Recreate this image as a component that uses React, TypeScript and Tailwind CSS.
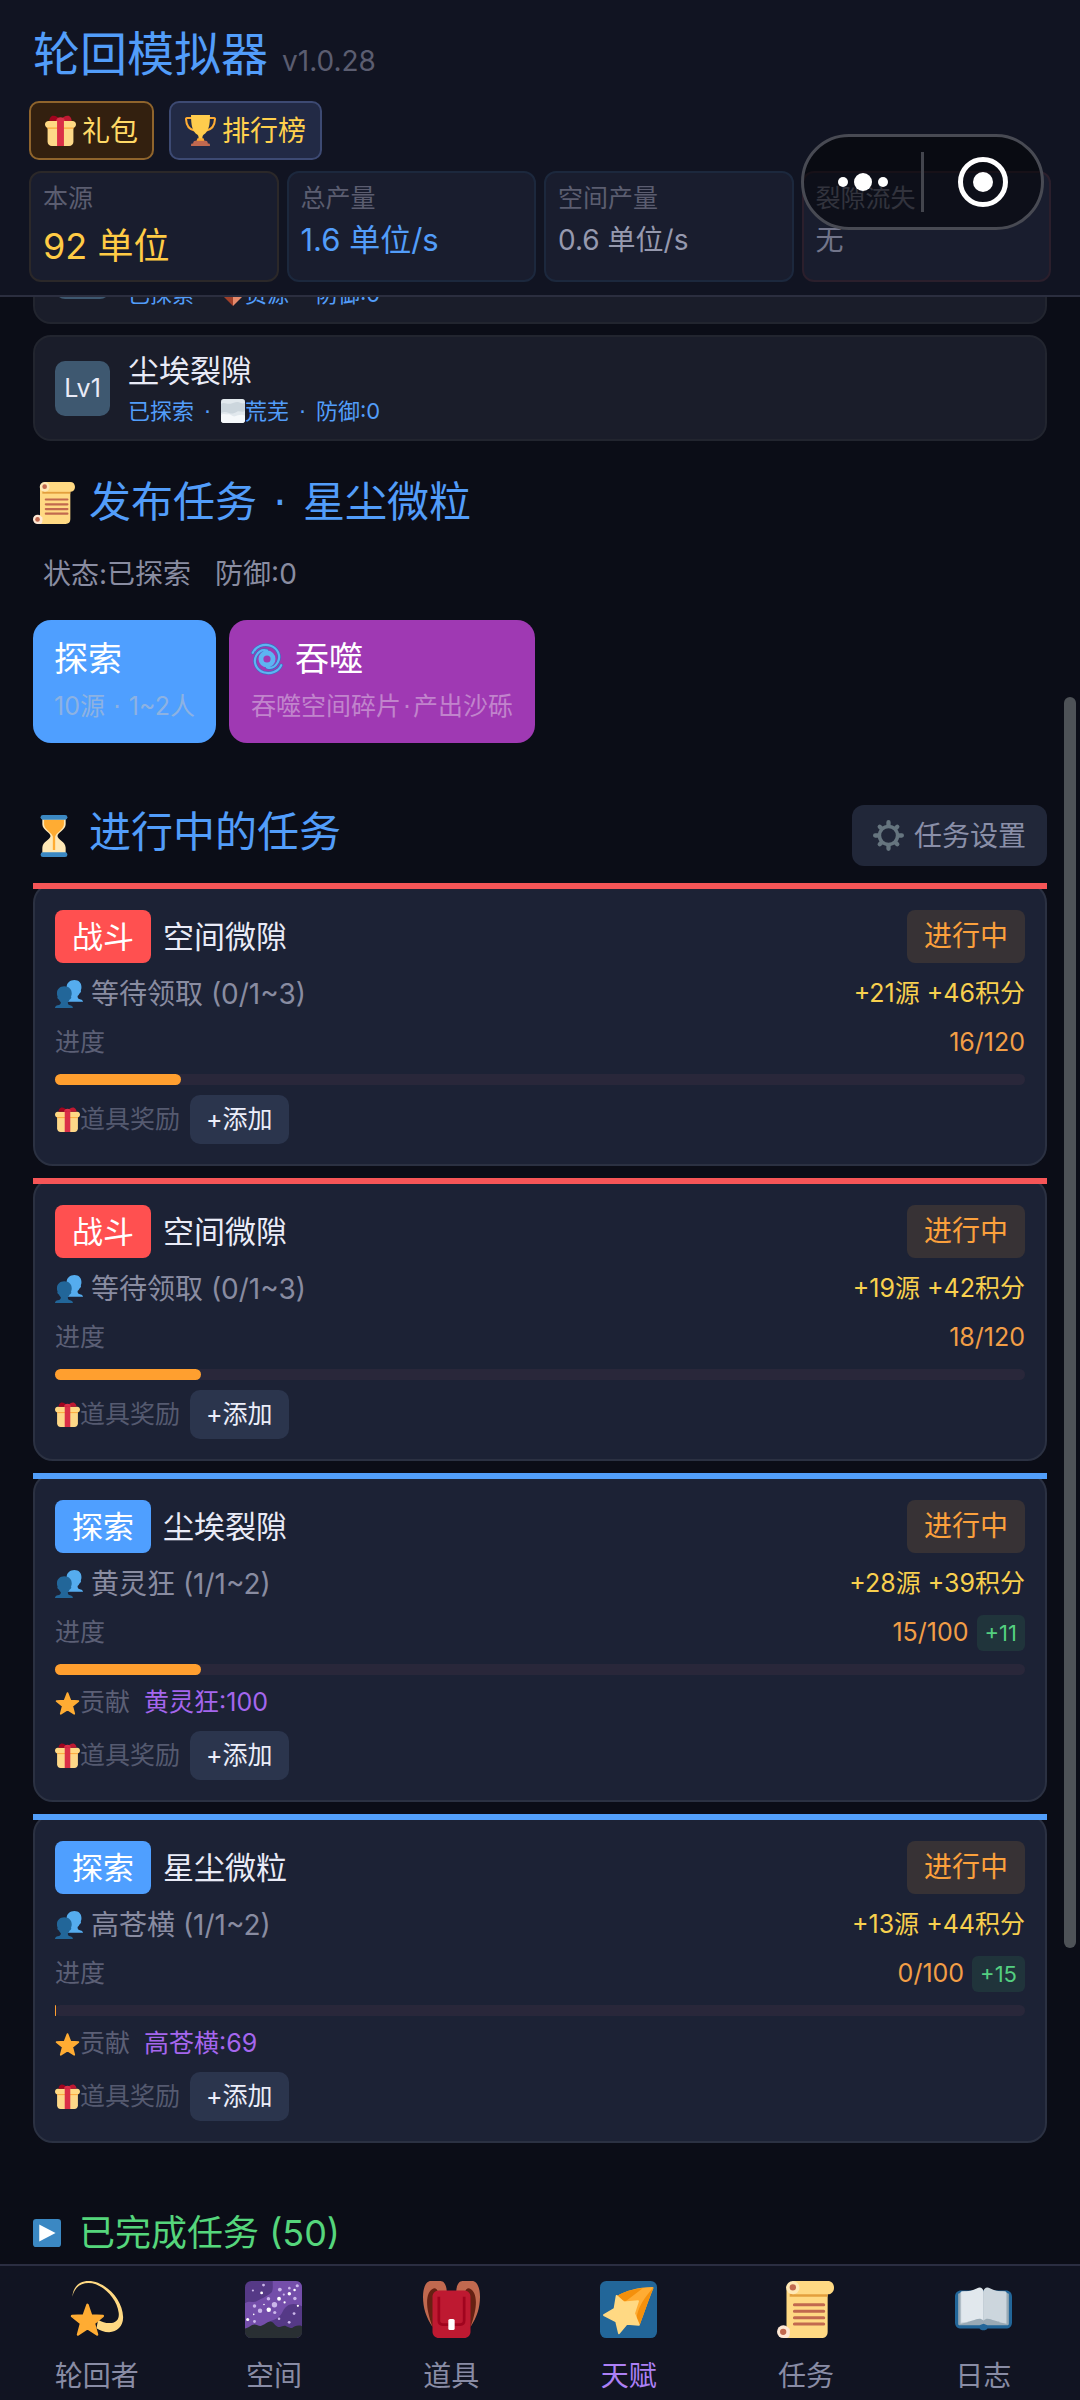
import { useState } from "react";
import type { ReactNode } from "react";

type IconProps = { className?: string };

type Task = {
  id: number;
  kind: "战斗" | "探索";
  place: string;
  members: string;
  reward: string;
  current: number;
  total: number;
  bonus?: string;
  contribution?: string;
};

const tasks: Task[] = [
  { id: 1, kind: "战斗", place: "空间微隙", members: "等待领取 (0/1~3)", reward: "+21源 +46积分", current: 16, total: 120 },
  { id: 2, kind: "战斗", place: "空间微隙", members: "等待领取 (0/1~3)", reward: "+19源 +42积分", current: 18, total: 120 },
  {
    id: 3,
    kind: "探索",
    place: "尘埃裂隙",
    members: "黄灵狂 (1/1~2)",
    reward: "+28源 +39积分",
    current: 15,
    total: 100,
    bonus: "+11",
    contribution: "黄灵狂:100",
  },
  {
    id: 4,
    kind: "探索",
    place: "星尘微粒",
    members: "高苍横 (1/1~2)",
    reward: "+13源 +44积分",
    current: 0,
    total: 100,
    bonus: "+15",
    contribution: "高苍横:69",
  },
];

const Svg = ({ className, children }: IconProps & { children: ReactNode }) => (
  <svg viewBox="0 0 36 36" className={`shrink-0 ${className ?? ""}`} aria-hidden="true">
    {children}
  </svg>
);

const GiftIcon = ({ className }: IconProps) => (
  <Svg className={className}>
    <path fill="#fdd888" d="M33 31c0 2.800-2.200 5-5 5H8c-2.800 0-5-2.200-5-5V14h30z" />
    <path fill="#ffd983" d="M36 11c0 2.200-1.800 4-4 4H4c-2.200 0-4-1.800-4-4s1.800-4 4-4h28c2.200 0 4 1.800 4 4z" />
    <path fill="#fcab40" d="M3 14.500h30V16H3z" />
    <path fill="#da2f47" d="M14 4h8v32h-8z" />
    <path fill="#a0041e" d="M18 6.500C16 2 11 0 8.500 1 6 2 5 5 5 7h12z" />
    <path fill="#be1931" d="M18 6.500C20 2 25 0 27.500 1 30 2 31 5 31 7H19z" />
    <path fill="#da2f47" d="M13 7c0-3 2-4.500 5-4.500S23 4 23 7z" />
  </Svg>
);

const TrophyIcon = ({ className }: IconProps) => (
  <Svg className={className}>
    <path
      fill="none"
      stroke="#ffac33"
      strokeWidth="2.400"
      d="M9 3.500H2.300C1.500 3.500 1 4 1.200 5 1.500 11 3 16.500 11 18M27 3.500h6.700c.8 0 1.300.5 1.100 1.500-.3 6-1.800 11.500-9.800 13"
    />
    <path fill="#ffcc4d" d="M7 0h22c0 12-1.500 19-7.500 23-1.500 1-1.500 4-1 7h-5c.5-3 .5-6-1-7C8.500 19 7 12 7 0z" />
    <path fill="#ffac33" d="M14.500 27h7l1.500 4H13z" />
    <path fill="#c1694f" d="M12 30h12c1.500 0 2.500 1 2.500 3H28c.8 0 1 .7 1 3H7c0-2.300.2-3 1-3h1.500c0-2 1-3 2.500-3z" />
  </Svg>
);

const ScrollIcon = ({ className }: IconProps) => (
  <Svg className={className}>
    <path fill="#ffd983" d="M6 3h26v29c0 2.500-1.500 4-4 4H4l2-5z" />
    <path fill="#e39f3d" d="M8 8h24v2H8z" />
    <path fill="#ffd983" d="M10 0h22c2.300 0 4 1.700 4 4.200s-1.700 4.200-4 4.200H10z" />
    <circle cx="10" cy="4.200" r="4.200" fill="#ffe8b6" />
    <circle cx="10" cy="4" r="2" fill="#c1694f" />
    <circle cx="4" cy="32" r="4" fill="#ffe8d4" />
    <path fill="#ffe8d4" d="M5 30h3v4c0 1-1 2-2 2H4z" />
    <circle cx="3.900" cy="32.100" r="2" fill="#c1694f" />
    <path stroke="#c1694f" strokeWidth="1.900" strokeLinecap="round" d="M11 15h18.500M11 19.100h18.500M11 23.200h18.500M11 27.200h18.500" />
  </Svg>
);

const HourglassIcon = ({ className }: IconProps) => (
  <Svg className={className}>
    <path fill="#ffe8b6" d="M8 3h20v5c0 5-7 7-7 10s7 5 7 10v5H8v-5c0-5 7-7 7-10S8 13 8 8z" />
    <path fill="#ffac33" d="M9.500 4h17v4c0 4.500-6.500 7-7.500 10.500V30h-2V18.500C16 15 9.500 12.500 9.500 8z" />
    <rect x="6.500" y="0" width="23" height="4" rx="2" fill="#3b88c3" />
    <rect x="6.500" y="32" width="23" height="4" rx="2" fill="#3b88c3" />
  </Svg>
);

const GearIcon = ({ className }: IconProps) => (
  <Svg className={className}>
    <circle cx="18" cy="18" r="10.500" fill="none" stroke="#66757f" strokeWidth="4" />
    <path
      stroke="#66757f"
      strokeWidth="5"
      strokeLinecap="round"
      d="M18 2.500V6M18 30v3.500M2.500 18H6M30 18h3.500M7.800 7.800l1.500 1.500M26.700 26.700l1.500 1.500M28.200 7.800l-1.500 1.500M9.300 26.700l-1.500 1.500"
    />
  </Svg>
);

const CycloneIcon = ({ className }: IconProps) => (
  <Svg className={className}>
    <g fill="none" stroke="#3b6fc0" strokeWidth="3.800" strokeLinecap="round">
      <path d="M2 11C5 4 14 .5 22 3c8.500 3 12 12 8 19-3 5-7.500 7-12 5.500" />
      <path d="M34 25c-3 7-12 10.500-20 8-8.500-3-12-12-8-19 3-5 7.500-7 12-5.500" />
    </g>
    <g fill="none" stroke="#5db4f2" strokeLinecap="round">
      <path strokeWidth="2.400" d="M2 11C5 4 14 .5 22 3c8.500 3 12 12 8 19-3 5-7.500 7-12 5.500" />
      <path strokeWidth="2.400" d="M34 25c-3 7-12 10.500-20 8-8.500-3-12-12-8-19 3-5 7.500-7 12-5.500" />
      <circle cx="18" cy="18" r="6.800" strokeWidth="5.500" />
    </g>
  </Svg>
);

const PeopleIcon = ({ className }: IconProps) => (
  <Svg className={className}>
    <path fill="#55acee" d="M25 0c5.500 0 9 3.500 9 9 0 2-.2 3-.8 4.200.8 1.500-.2 3.500-1.700 4-.6 1.500-1.500 2.600-2.500 3.300 0 3 1 3.800 4 4.500 2 .5 3 1.500 3 3H15V9c0-5.500 4.500-9 10-9z" />
    <path fill="#226699" d="M12 8c5.500 0 9.500 3.500 9.500 9 0 2-.3 3-.9 4.200.9 1.500-.2 3.500-1.700 4-.5 1.500-1.400 2.600-2.400 3.300 0 3 1 3.600 3 4 2.500.5 3.500 2 3.500 3.500H0c0-2 1.500-3 3.500-3.500 3-.7 4-1.500 4-4-1-.7-2-1.800-2.500-3.300-1.500-.5-2.500-2.500-1.700-4C2.700 20 2.500 19 2.500 17 2.500 11.500 6.500 8 12 8z" />
  </Svg>
);

const StarIcon = ({ className }: IconProps) => (
  <Svg className={className}>
    <path
      fill="#ffac33"
      stroke="#ffac33"
      strokeWidth="2.500"
      strokeLinejoin="round"
      d="M18 3l4.200 10.700 11.500.7-8.900 7.300 2.900 11.100L18 26.600l-9.700 6.200 2.900-11.100-8.900-7.300 11.500-.7z"
    />
  </Svg>
);

const FogIcon = ({ className }: IconProps) => (
  <Svg className={className}>
    <rect width="36" height="36" rx="4" fill="#e1e8ed" />
    <path fill="#ccd6dd" d="M0 7c5-3 9 1 14 0s9-4 13-2 6 2 9 1v12c-4 3-8-1-12 1s-7 4-12 2-8-2-12 0z" />
    <path fill="#f5f8fa" d="M0 24c4-3 8 0 11-1s6 4 10 3 9-4 15-1v7c0 2-2 4-4 4H4c-2 0-4-2-4-4z" />
  </Svg>
);

const OreIcon = ({ className }: IconProps) => (
  <Svg className={className}>
    <path fill="#a0402a" d="M5 8l13-6v34L4 22z" />
    <path fill="#e58a6b" d="M18 2l13 6 1 14-14 14z" />
  </Svg>
);

const PlayIcon = ({ className }: IconProps) => (
  <Svg className={className}>
    <rect width="36" height="36" rx="4" fill="#3b88c3" />
    <path fill="#fff" d="M8 7l21 11L8 29z" />
  </Svg>
);

const DizzyIcon = ({ className }: IconProps) => (
  <Svg className={className}>
    <path
      fill="#ffd983"
      d="M2.800 10C3 4 7 0 13 0c10 0 21.500 11 21.800 22.700C35 28.500 31 32.300 26 32.300c-3 0-6-1-8-2.500l1-5.300c3 2 6 2.300 8.500 2 3.500-.5 5-3 4.500-6.500C31 11 21.500 1.200 13 1.200 8 1.200 4 4 2.800 10z"
    />
    <path
      fill="#ffac33"
      stroke="#ffac33"
      strokeWidth="1.500"
      strokeLinejoin="round"
      d="M12.300 15l2.300 6.700 7.400.4-5.600 4.700 2 7-6.100-3.900-6 3.900 1.900-7-5.700-4.700 7.400-.4z"
    />
  </Svg>
);

const whiteStars = [
  [10.5, 7.5, 0.9], [21.5, 11.2, 1.2], [28, 8, 1.1], [31.3, 5.7, 0.8], [25, 13.5, 0.7],
  [15, 18.1, 1.4], [33.4, 15.7, 0.7], [1.7, 24.3, 1], [5.5, 21.1, 0.5], [12, 14.8, 0.5],
];
const violetStars = [
  [5, 6, 0.7], [11.7, 2.6, 0.9], [22, 5.4, 1.2], [33, 3, 1], [31.5, 11, 1.1], [14.8, 11.2, 1.1],
  [18.6, 15, 1.7], [9.5, 18.8, 1.4], [6, 15.8, 1.1], [18.8, 19.9, 1], [21.5, 23.8, 0.8],
  [27.9, 26.1, 0.9], [31, 20.6, 0.9], [6, 25.6, 0.9], [28, 4.5, 0.8], [24.5, 8.6, 0.7],
];

const GalaxyIcon = ({ className }: IconProps) => (
  <Svg className={className}>
    <rect width="36" height="36" rx="4" fill="#553986" />
    <path fill="#744eaa" d="M17.500 0H32c2.200 0 4 1.800 4 4v12c-6-3-10-1-12 3s-4 5-7 6-4 3-5 5L0 31V14c3-2 5 0 7-1 4-2 8-4 10-6 .8-2 .5-4 .5-7z" />
    {violetStars.map(([x, y, r]) => (
      <circle key={`${x}-${y}`} cx={x} cy={y} r={r} fill="#cbb7ea" />
    ))}
    {whiteStars.map(([x, y, r]) => (
      <circle key={`${x}-${y}`} cx={x} cy={y} r={r} fill="#fff" />
    ))}
    <path fill="#292f33" d="M0 30c2 0 4-2.500 6-2.500S9 29 11 28s3-2.500 5-2.500 3 3 5 3.500 3-1.200 5-.5 3 1.500 4 1 3-2 6-1v4c0 2-2 3.500-4 3.500H4c-2 0-4-1.500-4-4z" />
  </Svg>
);

const BackpackIcon = ({ className }: IconProps) => (
  <Svg className={className}>
    <path fill="#662113" d="M4 3h6v27H7C3 25 1 19 1 12zM32 3h-6v27h3c4-5 6-11 6-18z" />
    <path fill="#c1694f" d="M5 0h6c2.500 0 4 3 4 7H9.500C9 5 7.500 4 6 5 2.500 7 .5 14 6 29 2 23 0 17 0 10 0 4 2 0 5 0zM31 0h-6c-2.500 0-4 3-4 7h5.500c.5-2 2-3 3.500-2 3.500 2 5.500 9 0 24 4-6 6-12 6-19 0-6-2-10-5-10z" />
    <path fill="#be1931" d="M10 6h16c2.200 0 4 1.800 4 4v22c0 2.200-1.800 4-4 4H10c-2.200 0-4-1.800-4-4V10c0-2.200 1.800-4 4-4z" />
    <path fill="none" stroke="#a0041e" strokeWidth="1.700" d="M10 10v15c0 1.700 1 2.500 2.500 2.500h11c1.500 0 2.500-.8 2.500-2.500V10" />
    <rect x="16" y="24" width="4" height="7" rx="1" fill="#fff" />
  </Svg>
);

const ShootingStarIcon = ({ className }: IconProps) => (
  <Svg className={className}>
    <rect width="36" height="36" rx="4" fill="#226699" />
    <path fill="#ffac33" d="M10 10c6-4 14-6 23-6.200.8 0 1 .6.6 1.200C31 11 28 20 25 28z" />
    <path fill="#f4900c" d="M10 10c5-3.500 11-5 17-5.500L16 13zM33.800 4C31 11 28 20 25 28l-2-4c1-8 5-13 10.800-20z" />
    <path
      fill="#ffd983"
      stroke="#ffd983"
      strokeWidth="1.200"
      strokeLinejoin="round"
      d="M10.500 9.500l4.500 4 9-.8-2.500 7.800 3 7.200-7.500-.7-5 6-1.800-7.500L2.500 21.500l6.700-4z"
    />
  </Svg>
);

const BookIcon = ({ className }: IconProps) => (
  <Svg className={className}>
    <path fill="#226699" d="M4 6h28c2.500 0 4 1.500 4 4v16c0 2.500-1.500 4-4 4H20.500c-.5 1.500-4.500 1.500-5 0H4c-2.500 0-4-1.500-4-4V10c0-2.500 1.500-4 4-4z" />
    <path fill="#99aab5" d="M2 8l4-1.500h24L34 8v19c0 .8-.5 1-1 1H20.500L18 27l-2.500 1H3c-.5 0-1-.2-1-1z" />
    <path fill="#ccd6dd" d="M3.500 7H8v19l-4.500 1zM32.500 7H28v19l4.500 1z" />
    <path fill="#e1e8ed" d="M4 6.500c5 0 7-.5 10-2 2-.9 4 0 4 2.500v18c-2-2-4-1-7 0s-5 1-7 1z" />
    <path fill="#ccd6dd" d="M32 6.500c-5 0-7-.5-10-2-2-.9-4 0-4 2.500v18c2-2 4-1 7 0s5 1 7 1z" />
  </Svg>
);

const stats = [
  { label: "本源", value: "92 单位", tone: "text-4xl leading-12 text-[#ffcb45]", border: "border-[#2b2829]" },
  { label: "总产量", value: "1.6 单位/s", tone: "text-[31px] leading-9 text-[#529dfa]", border: "border-[#1c283d]" },
  { label: "空间产量", value: "0.6 单位/s", tone: "text-[28px] leading-9 text-[#9699ae]", border: "border-[#1c283d]" },
  { label: "裂隙流失", value: "无", tone: "text-[28px] leading-9 text-[#72758a]", border: "border-[#2b1f2c]" },
];

const regions = [
  { name: "空间微隙", icon: OreIcon, trait: "资源" },
  { name: "尘埃裂隙", icon: FogIcon, trait: "荒芜" },
];

const tabs = [
  { name: "轮回者", icon: DizzyIcon },
  { name: "空间", icon: GalaxyIcon },
  { name: "道具", icon: BackpackIcon },
  { name: "天赋", icon: ShootingStarIcon },
  { name: "任务", icon: ScrollIcon },
  { name: "日志", icon: BookIcon },
];

// the CJK face draws the middle dot full width, so it gets a Latin one
const Dot = ({ className }: IconProps) => (
  <span className={`font-['DejaVu_Sans',sans-serif] whitespace-pre ${className ?? ""}`}> · </span>
);

const Header = () => (
  <header className="relative shrink-0 border-b-2 border-[#2b2e3f] bg-[#111422] px-[29px] pt-6 pb-[13px]">
    <div className="flex items-baseline gap-3.5 px-1">
      <h1 className="text-[47px] leading-[60px] text-[#529dfa]">轮回模拟器</h1>
      <span className="text-[28px] text-[#5b5d70]">v1.0.28</span>
    </div>
    <div className="mt-[17px] flex gap-[15px]">
      <button
        type="button"
        className="flex h-[59px] items-center gap-1.5 rounded-[10px] border-2 border-[#8f642c] bg-[#33200f] px-3.5 text-[28px] text-[#ffd966]"
      >
        <GiftIcon className="size-[31px]" />
        礼包
      </button>
      <button
        type="button"
        className="flex h-[59px] items-center gap-1.5 rounded-[10px] border-2 border-[#3d4a73] bg-[#222a45] px-3.5 text-[28px] text-[#ffd04d]"
      >
        <TrophyIcon className="size-[31px]" />
        排行榜
      </button>
    </div>
    <dl className="mt-[11px] grid grid-cols-4 gap-2">
      {stats.map((stat) => (
        <div key={stat.label} className={`h-[111px] rounded-[12px] border-2 bg-[#191d2e] px-3 pt-[9px] ${stat.border}`}>
          <dt className="text-[25px] leading-8 text-[#5b5d70]">{stat.label}</dt>
          <dd className={`mt-2 ${stat.tone}`}>{stat.value}</dd>
        </div>
      ))}
    </dl>

    {/* floating host controls, drawn over the last stat */}
    <div className="absolute top-[134px] right-9 flex h-24 w-[243px] items-center rounded-full border-3 border-[#484a53] bg-black/45">
      <button type="button" aria-label="更多" className="flex h-full flex-1 items-center justify-center gap-1.5">
        <span className="size-2.5 rounded-full bg-white" />
        <span className="size-[18px] rounded-full bg-white" />
        <span className="size-2.5 rounded-full bg-white" />
      </button>
      <span className="h-15 w-[3px] bg-[#43454d]" />
      <button type="button" aria-label="关闭" className="flex h-full flex-1 items-center justify-center">
        <span className="flex size-[50px] items-center justify-center rounded-full border-5 border-white">
          <span className="size-5 rounded-full bg-white" />
        </span>
      </button>
    </div>
  </header>
);

const TaskCard = ({ task }: { task: Task }) => {
  const percent = Math.floor((task.current / task.total) * 100);
  const fight = task.kind === "战斗";

  return (
    <li className="relative rounded-[20px] border-2 border-[#2b3142] bg-[#1c2235] px-5 pt-[25px] pb-5">
      <span className={`absolute -inset-x-0.5 -top-0.5 h-1.5 ${fight ? "bg-[#f65557]" : "bg-[#529ffb]"}`} />
      <div className="flex items-center gap-3">
        <span className={`rounded-lg px-[17px] text-[31px] leading-[53px] text-white ${fight ? "bg-[#ff5050]" : "bg-[#4f9fff]"}`}>
          {task.kind}
        </span>
        <h3 className="text-[31px] leading-[53px] text-[#e9ebf7]">{task.place}</h3>
        <span className="ml-auto rounded-lg bg-[#373235] px-[17px] text-[28px] leading-[53px] text-[#fba03c]">进行中</span>
      </div>
      <div className="mt-[13px] flex h-9 items-center justify-between">
        <span className="flex items-center gap-2 text-[28px] text-[#898ca1]">
          <PeopleIcon className="size-7" />
          {task.members}
        </span>
        <span className="text-[25px] text-[#f8d04e]">{task.reward}</span>
      </div>
      <div className="mt-[13px] flex h-9 items-center justify-between text-[25px]">
        <span className="text-[#5b5f75]">进度</span>
        <span className="flex items-center gap-2 text-[#f29e46]">
          {task.current}/{task.total}
          {task.bonus && (
            <span className="rounded-md bg-[#20343b] px-2 text-[22px] leading-9 text-[#54cf80]">{task.bonus}</span>
          )}
        </span>
      </div>
      <div className="mt-[13px] h-[11px] rounded-full bg-[#29273a]">
        <div className="h-full min-w-px rounded-full bg-[#ff9f2f]" style={{ width: `${percent}%` }} />
      </div>
      {task.contribution && (
        <div className="mt-2.5 flex h-9 items-center text-[25px]">
          <StarIcon className="size-[25px]" />
          <span className="text-[#5b5f75]">贡献</span>
          <span className="ml-3.5 text-[#a566ee]">{task.contribution}</span>
        </div>
      )}
      <div className="mt-2.5 flex items-center text-[25px]">
        <GiftIcon className="size-[25px]" />
        <span className="text-[#555a70]">道具奖励</span>
        <button type="button" className="ml-2.5 rounded-[10px] bg-[#2b354d] px-4 leading-[49px] text-[#eceefa]">
          +添加
        </button>
      </div>
    </li>
  );
};

const App = () => {
  const [active, setActive] = useState("天赋");

  return (
    <div className="flex h-screen flex-col overflow-hidden bg-[#0b0d17] font-['Inter','Noto_Sans_CJK_SC',sans-serif] text-[#e9ebf7]">
      <Header />

      <main className="relative min-h-0 flex-1 overflow-hidden px-[33px]">
        {/* the list is scrolled part of the way under the header */}
        <ul className="-mt-[79px] space-y-[11px]">
          {regions.map((region) => (
            <li
              key={region.name}
              className="flex h-[106px] items-center gap-[18px] rounded-[18px] border-2 border-[#22252f] bg-[#1a1d2a] px-5"
            >
              <span className="w-[55px] rounded-[10px] bg-[#3e5870] text-center text-[25px] leading-[55px]">Lv1</span>
              <div className="pt-1.5">
                <div className="text-[31px] leading-10">{region.name}</div>
                <div className="flex items-center text-[22px] leading-10 text-[#529dfa]">
                  <span>
                    已探索
                    <Dot className="px-[3px]" />
                  </span>
                  <region.icon className="size-6" />
                  <span>
                    {region.trait}
                    <Dot className="px-[3px]" />
                    防御:0
                  </span>
                </div>
              </div>
            </li>
          ))}
        </ul>

        <section>
          <h2 className="mt-[31px] flex items-center gap-3.5 text-[42px] leading-[60px] text-[#529dfa]">
            <ScrollIcon className="size-[42px]" />
            <span>
              发布任务
              <Dot className="px-[3px]" />
              星尘微粒
            </span>
          </h2>
          <p className="mt-[21px] flex gap-6 px-2.5 text-[28px] leading-10 text-[#898ca1]">
            <span>状态:已探索</span>
            <span>防御:0</span>
          </p>
          <div className="mt-[26px] flex gap-[13px]">
            <button type="button" className="h-[123px] rounded-[18px] bg-[#4f9fff] px-[21px] text-left text-white">
              <span className="block text-[34px] leading-[50px]">探索</span>
              <span className="block text-[25px] leading-11 text-[#8db2e2]">
                10源
                <Dot />
                1~2人
              </span>
            </button>
            <button type="button" className="h-[123px] rounded-[18px] bg-[#9f39b3] px-[22px] text-left text-white">
              <span className="flex items-center gap-3 text-[34px] leading-[50px]">
                <CycloneIcon className="size-8" />
                吞噬
              </span>
              <span className="block text-[25px] leading-11 text-[#c184cc]">
                吞噬空间碎片
                <span className="px-0.5 font-['DejaVu_Sans',sans-serif]">·</span>
                产出沙砾
              </span>
            </button>
          </div>
        </section>

        <section>
          <div className="mt-[62px] flex items-center justify-between">
            <h2 className="flex items-center gap-3.5 text-[42px] leading-[60px] text-[#529dfa]">
              <HourglassIcon className="size-[42px]" />
              <span className="pb-2 leading-[52px]">进行中的任务</span>
            </h2>
            <button
              type="button"
              className="flex h-[61px] items-center gap-2.5 rounded-[12px] bg-[#212739] px-[21px] text-[28px] text-[#8a8fa8]"
            >
              <GearIcon className="size-[31px]" />
              任务设置
            </button>
          </div>
          <ul className="mt-[17px] space-y-3">
            {tasks.map((task) => (
              <TaskCard key={task.id} task={task} />
            ))}
          </ul>
        </section>

        <h2 className="mt-16 flex items-center gap-[18px] text-4xl leading-[52px] text-[#55d67c]">
          <PlayIcon className="size-7" />
          已完成任务 (50)
        </h2>

        <div className="absolute top-[400px] right-1 h-[1251px] w-3 rounded-full bg-[#4e5257]" />
      </main>

      <nav className="flex shrink-0 border-t-2 border-[#2b2e42] bg-[#111422] px-2 pt-[15px] pb-1">
        {tabs.map((tab) => (
          <button
            key={tab.name}
            type="button"
            onClick={() => setActive(tab.name)}
            className={`flex flex-1 flex-col items-center gap-[18px] text-[28px] leading-10 ${
              active === tab.name ? "text-[#ac80f5]" : "text-[#898ca5]"
            }`}
          >
            <tab.icon className="size-[57px]" />
            {tab.name}
          </button>
        ))}
      </nav>
    </div>
  );
};

export default App;
